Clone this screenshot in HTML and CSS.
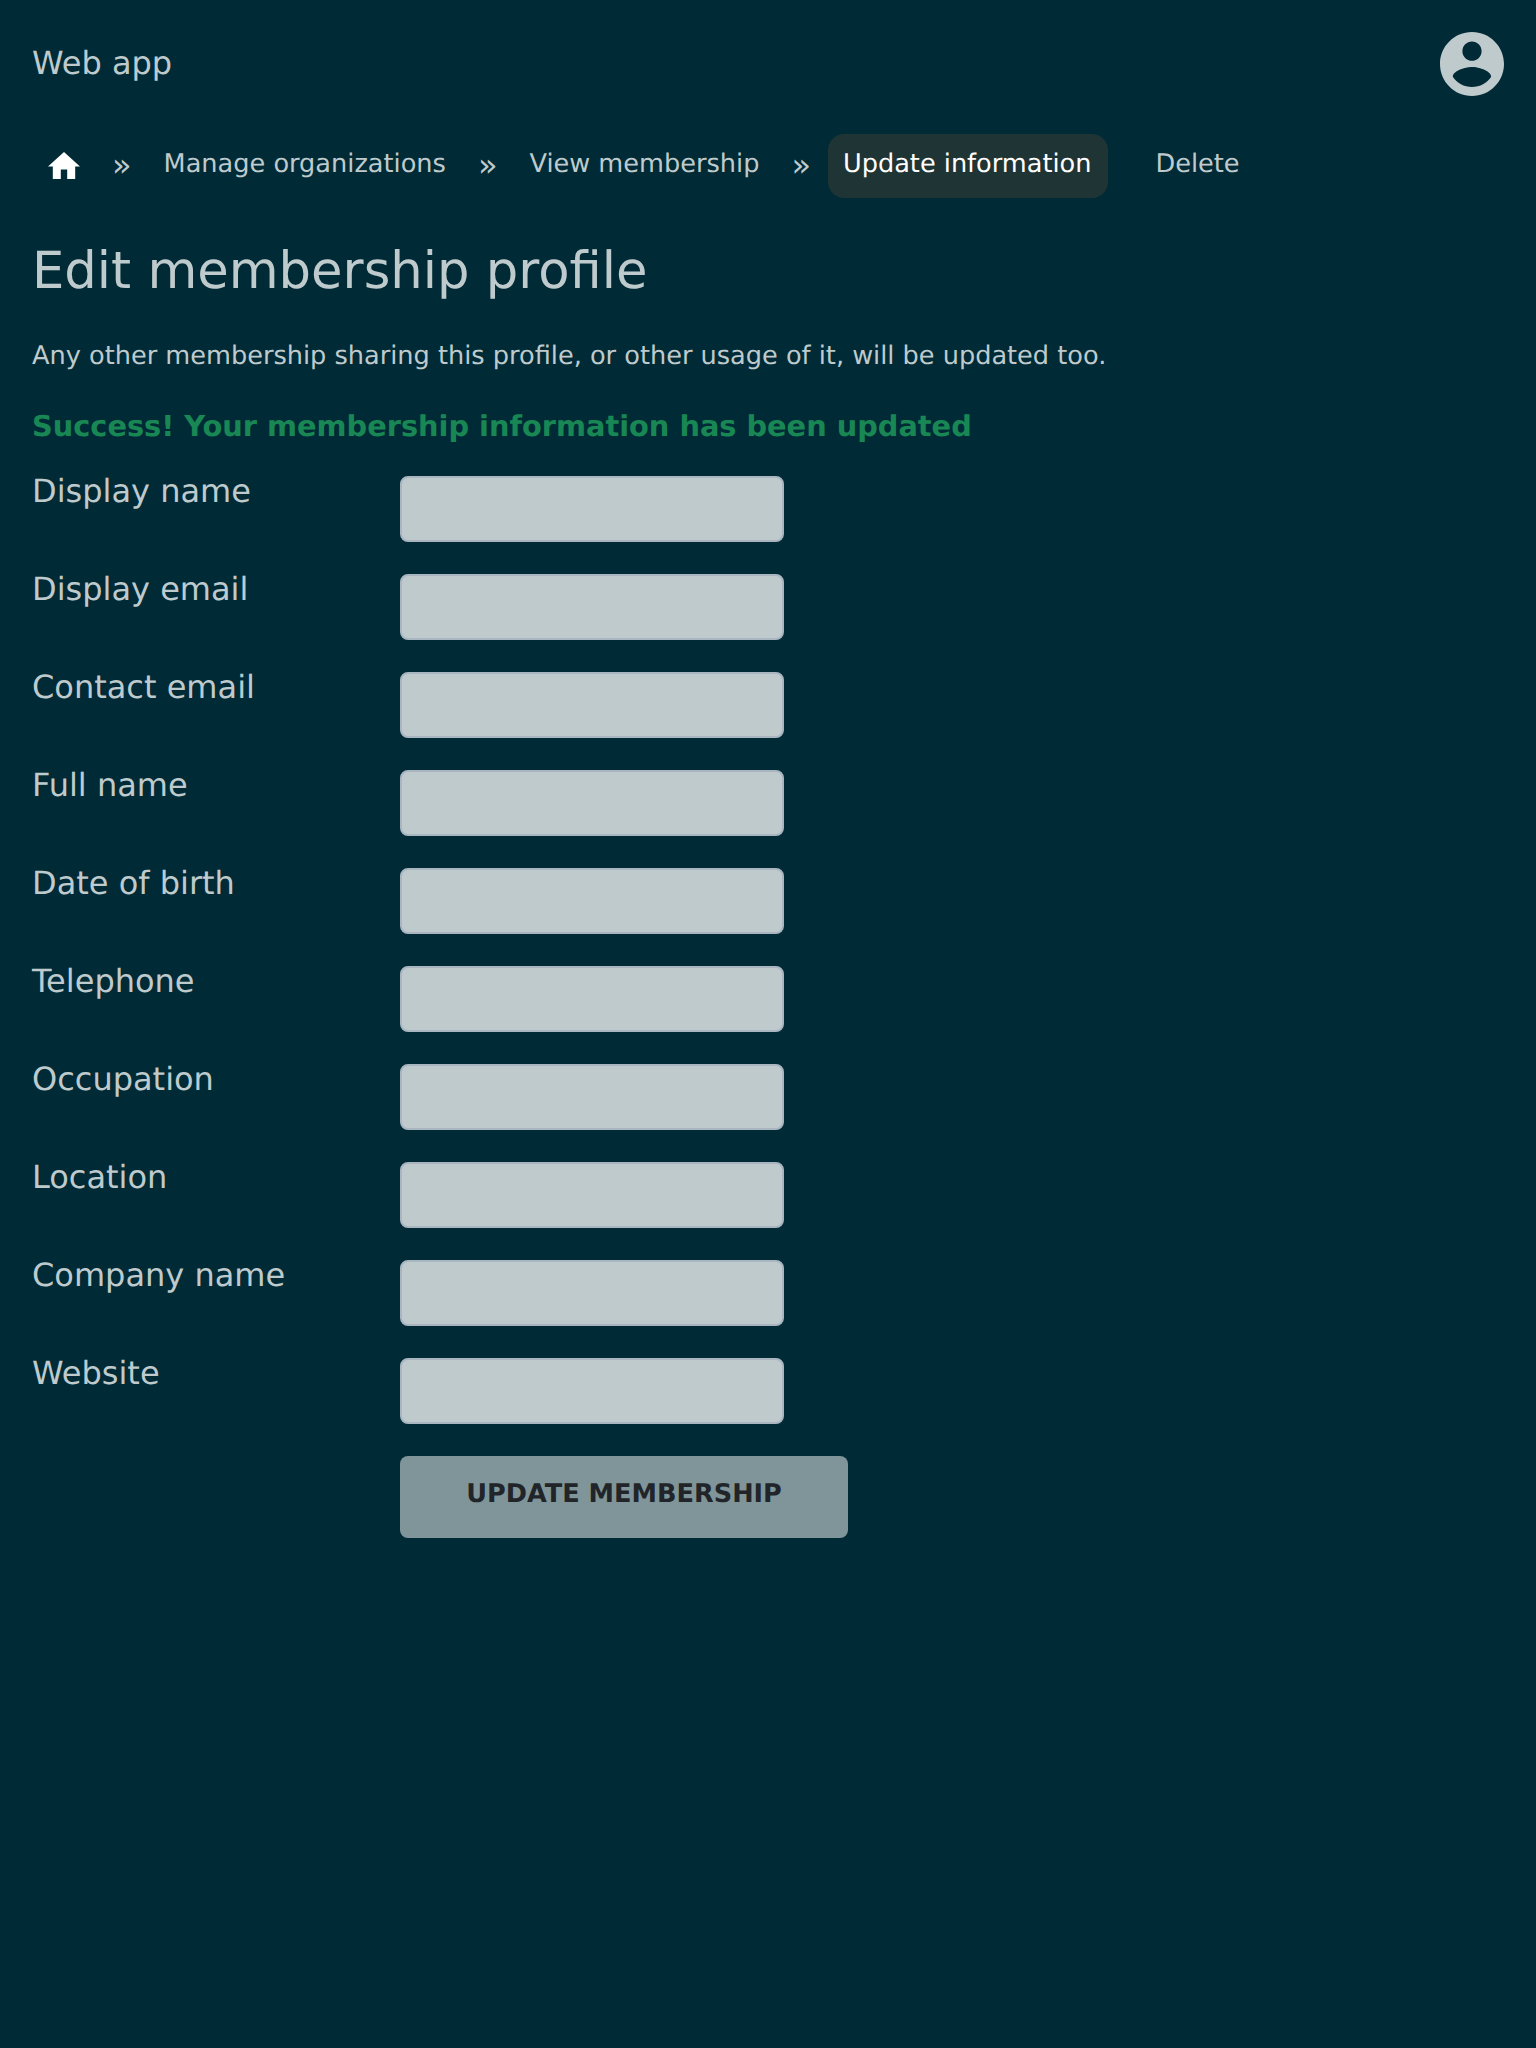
FILE: index.html
```html
<!DOCTYPE html>
<html lang="en">
<head>
<meta charset="utf-8">
<title>Edit membership profile</title>
<link rel="stylesheet" href="styles.css">
</head>
<body>
<header class="header">
  <span class="brand">Web app</span>
  <svg class="avatar" viewBox="2 2 20 20"><path d="M12 2C6.48 2 2 6.48 2 12s4.48 10 10 10 10-4.480 10-10S17.520 2 12 2zm0 3c1.660 0 3 1.340 3 3s-1.340 3-3 3-3-1.340-3-3 1.340-3 3-3zm0 14.200c-2.500 0-4.710-1.280-6-3.220.03-1.990 4-3.080 6-3.080 1.990 0 5.970 1.090 6 3.080-1.290 1.940-3.500 3.220-6 3.220z"/></svg>
</header>
<nav class="crumbs">
  <a class="crumb home"><svg class="home-icon" viewBox="2 3 20 17"><path d="M10 20v-6h4v6h5v-8h3L12 3 2 12h3v8z"/></svg></a>
  <span class="sep">»</span>
  <a class="crumb">Manage organizations</a>
  <span class="sep">»</span>
  <a class="crumb">View membership</a>
  <span class="sep">»</span>
  <a class="crumb active">Update information</a>
  <a class="crumb last">Delete</a>
</nav>
<main class="main">
  <h1 class="title">Edit membership profile</h1>
  <p class="note">Any other membership sharing this profile, or other usage of it, will be updated too.</p>
  <p class="success">Success! Your membership information has been updated</p>
  <form class="form">
    <label class="label" for="f1">Display name</label><input class="input" id="f1">
    <label class="label" for="f2">Display email</label><input class="input" id="f2">
    <label class="label" for="f3">Contact email</label><input class="input" id="f3">
    <label class="label" for="f4">Full name</label><input class="input" id="f4">
    <label class="label" for="f5">Date of birth</label><input class="input" id="f5">
    <label class="label" for="f6">Telephone</label><input class="input" id="f6">
    <label class="label" for="f7">Occupation</label><input class="input" id="f7">
    <label class="label" for="f8">Location</label><input class="input" id="f8">
    <label class="label" for="f9">Company name</label><input class="input" id="f9">
    <label class="label" for="f10">Website</label><input class="input" id="f10">
    <button class="button" type="button">UPDATE MEMBERSHIP</button>
  </form>
</main>
</body>
</html>
```
FILE: styles.css
```css
* { box-sizing: border-box; }
body {
  margin: 0;
  min-height: 2048px;
  background: #002b36;
  color: #bfcacd;
  font: 32px "DejaVu Sans", sans-serif;
  text-rendering: geometricPrecision;
}
.header {
  display: flex;
  justify-content: space-between;
  height: 134px;
  padding: 32px 32px 0;
}
.brand { line-height: 62px; }
.avatar { width: 64px; height: 64px; fill: #bfcacd; }
.crumbs {
  display: flex;
  height: 64px;
  padding-left: 32px;
}
.crumb {
  padding: 0 16px;
  border-radius: 16px;
  font-size: 25.6px;
  line-height: 60px;
  white-space: nowrap;
}
.home { padding-top: 18px; line-height: 0; }
.home-icon { width: 32px; height: 27.2px; fill: #fff; }
.sep {
  width: 51.6px;
  text-align: center;
  line-height: 62px;
}
.active {
  margin-left: 0.6px;
  padding-left: 15.4px;
  background: #1f3434;
  color: #fff;
}
.last { margin-left: 32px; }
.main { padding: 0 32px; }
.title {
  margin: 37px 0 0;
  font-size: 51.2px;
  font-weight: 400;
  line-height: 72px;
}
.note {
  margin: 29px 0 0;
  font-size: 25.6px;
  line-height: 40px;
}
.success {
  margin: 28px 0 0;
  color: #198754;
  font-size: 28.8px;
  font-weight: 700;
  line-height: 44px;
}
.form {
  display: grid;
  grid-template-columns: 368px 448px;
  row-gap: 32px;
  margin-top: 28px;
}
.label { line-height: 30px; }
.input {
  width: 384px;
  height: 66px;
  padding: 0 16px;
  border: 2px solid #a9b6c2;
  border-radius: 8px;
  background: #bfcacd;
  outline: 0;
}
.button {
  grid-column: 2;
  height: 82px;
  padding: 0 0 6px;
  border: 0;
  border-radius: 8px;
  background: #80959a;
  color: #212529;
  font: 700 25.6px "DejaVu Sans", sans-serif;
  text-rendering: geometricPrecision;
}
```
